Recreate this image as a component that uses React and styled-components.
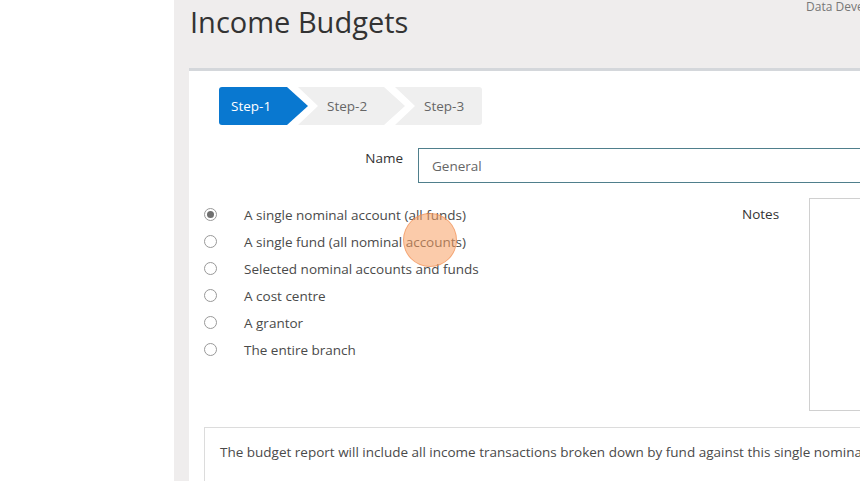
import React from 'react';
import styled, { createGlobalStyle } from 'styled-components';

const GlobalStyle = createGlobalStyle`
  html, body {
    margin: 0;
    padding: 0;
    background: #fff;
    font-family: "Open Sans", "Liberation Sans", sans-serif;
  }
`;

const options = [
  'A single nominal account (all funds)',
  'A single fund (all nominal accounts)',
  'Selected nominal accounts and funds',
  'A cost centre',
  'A grantor',
  'The entire branch',
];

const steps = ['Step-1', 'Step-2', 'Step-3'];

export default function App() {
  return (
    <Page>
      <GlobalStyle />
      <Sidebar />
      <Main>
        <Header>
          <Title>Income Budgets</Title>
          <UserInfo>Data Development</UserInfo>
        </Header>
        <Card>
          <Steps>
            {steps.map((s, i) => (
              <Step key={s} $index={i} $active={i === 0} $last={i === steps.length - 1}>
                {s}
              </Step>
            ))}
          </Steps>

          <NameRow>
            <FieldLabel>Name</FieldLabel>
            <TextInput>General</TextInput>
          </NameRow>

          <OptionsRow>
            <OptionList>
              {options.map((o, i) => (
                <Option key={o}>
                  <Radio $checked={i === 0} />
                  <OptionText>{o}</OptionText>
                </Option>
              ))}
            </OptionList>
            <NotesLabel>Notes</NotesLabel>
            <Notes />
          </OptionsRow>

          <InfoBox>
            The budget report will include all income transactions broken down by fund against this single nominal account.
          </InfoBox>
        </Card>
      </Main>
      <ClickMark />
    </Page>
  );
}

const Page = styled.div`
  position: relative;
  display: grid;
  grid-template-columns: 174px 1fr;
  width: 860px;
  height: 481px;
  overflow: hidden;
`;

const Sidebar = styled.div`
  background: #fff;
`;

const Main = styled.div`
  background: #efeded;
  padding-left: 15px;
  overflow: hidden;
`;

const Header = styled.div`
  display: flex;
  align-items: flex-start;
  height: 68px;
`;

const Title = styled.h1`
  margin: 2px 0 0 1px;
  font-size: 29px;
  font-weight: 400;
  line-height: 40px;
  color: #333;
`;

const UserInfo = styled.div`
  margin-left: auto;
  width: 54px;
  min-width: 0;
  flex-shrink: 0;
  margin-top: -2px;
  white-space: nowrap;
  font-size: 12px;
  color: #777;
`;

const Card = styled.div`
  width: 900px;
  background: #fff;
  border-top: 3px solid #d4d7db;
  padding: 16px 15px 0;
  min-height: 420px;
`;

const Steps = styled.div`
  display: flex;
  margin-left: 15px;
  height: 38px;
`;

const Step = styled.div`
  display: flex;
  align-items: center;
  height: 38px;
  font-size: 13.5px;
  background: ${p => (p.$active ? '#0978d0' : '#efefef')};
  color: ${p => (p.$active ? '#fff' : '#666')};
  width: ${p => (p.$index === 0 ? 89 : p.$last ? 87 : 107)}px;
  margin-left: ${p => (p.$index === 0 ? 0 : -10)}px;
  padding-left: ${p => (p.$index === 0 ? 12 : 29)}px;
  box-sizing: border-box;
  border-radius: ${p => (p.$index === 0 ? '3px 0 0 3px' : p.$last ? '0 3px 3px 0' : '0')};
  clip-path: ${p =>
    p.$index === 0
      ? 'polygon(0 0, calc(100% - 21px) 0, 100% 50%, calc(100% - 21px) 100%, 0 100%)'
      : p.$last
      ? 'polygon(0 0, 100% 0, 100% 100%, 0 100%, 20px 50%)'
      : 'polygon(0 0, calc(100% - 21px) 0, 100% 50%, calc(100% - 21px) 100%, 0 100%, 20px 50%)'};
`;

const NameRow = styled.div`
  display: flex;
  margin-top: 23px;
  height: 35px;
`;

const FieldLabel = styled.label`
  flex: 0 0 199px;
  text-align: right;
  font-size: 13.5px;
  color: #333;
  padding-top: 1px;
`;

const TextInput = styled.div`
  margin-left: 15px;
  flex: 1;
  box-sizing: border-box;
  border: 1px solid #4f7f8c;
  padding: 0 13px;
  display: flex;
  align-items: center;
  font-size: 13.5px;
  color: #666;
`;

const OptionsRow = styled.div`
  display: flex;
  margin-top: 15px;
`;

const OptionList = styled.div`
  flex: 0 0 538px;
  display: flex;
  flex-direction: column;
  padding-top: 3px;
`;

const Option = styled.div`
  display: flex;
  align-items: center;
  height: 27px;
`;

const Radio = styled.span`
  width: 13px;
  height: 13px;
  border-radius: 50%;
  border: 1px solid #999;
  box-sizing: border-box;
  position: relative;
  flex-shrink: 0;
  margin-right: 27px;
  &::after {
    content: '';
    display: ${p => (p.$checked ? 'block' : 'none')};
    position: absolute;
    inset: 2px;
    border-radius: 50%;
    background: #6f6f6f;
  }
`;

const OptionText = styled.span`
  font-size: 13.5px;
  color: #4a4a4a;
`;

const NotesLabel = styled.div`
  flex: 0 0 67px;
  font-size: 13.5px;
  color: #333;
  padding-top: 7px;
`;

const Notes = styled.div`
  width: 200px;
  height: 213px;
  border: 1px solid #d0d0d0;
  box-sizing: border-box;
`;

const InfoBox = styled.div`
  margin-top: 16px;
  border: 1px solid #dcdcdc;
  padding: 15px 15px 20px;
  font-size: 13.5px;
  color: #4a4a4a;
  white-space: nowrap;
  overflow: hidden;
`;

const ClickMark = styled.div`
  position: absolute;
  left: 403px;
  top: 213px;
  width: 54px;
  height: 54px;
  border-radius: 50%;
  background: rgba(247, 160, 100, 0.55);
  border: 1px solid rgba(240, 140, 80, 0.6);
  box-sizing: border-box;
  pointer-events: none;
`;
